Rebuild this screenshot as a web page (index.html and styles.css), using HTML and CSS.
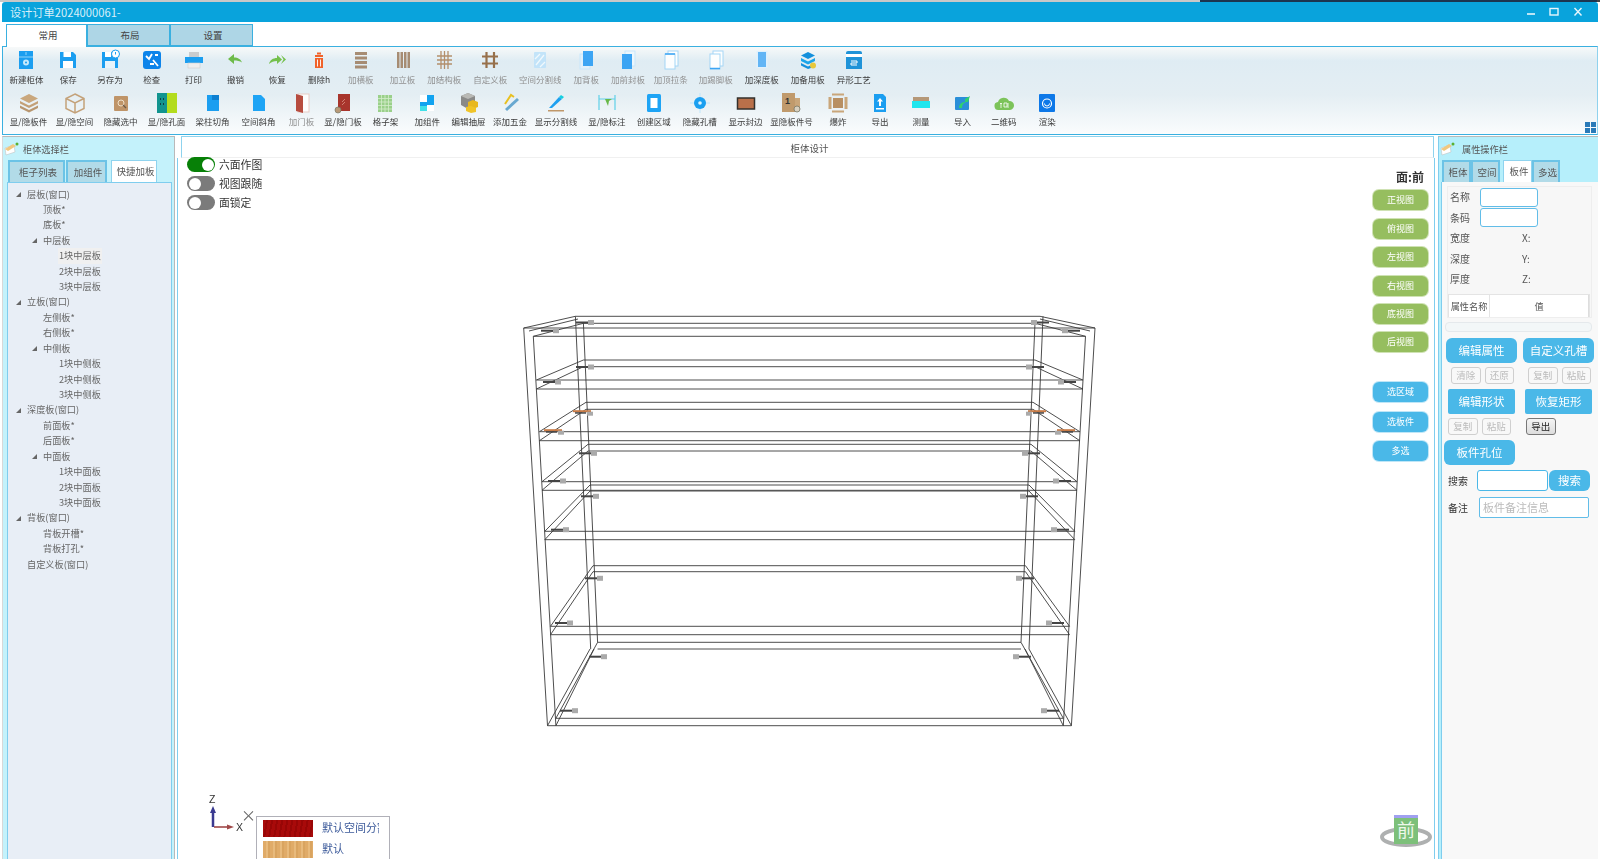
FILE: index.html
```html
<!DOCTYPE html>
<html lang="zh">
<head>
<meta charset="utf-8">
<title>设计订单2024000061-</title>
<link rel="stylesheet" href="styles.css">
</head>
<body>
<div class="topstrip"></div>
<div class="app">
  <header class="titlebar">
    <span class="title">设计订单2024000061-</span>
    <div class="winctl">
      <svg width="12" height="12" viewBox="0 0 12 12"><path d="M2 8h8" stroke="#e8f6fc" stroke-width="1.6"/></svg>
      <svg width="12" height="12" viewBox="0 0 12 12"><rect x="2" y="2.5" width="8" height="6.5" fill="none" stroke="#e8f6fc" stroke-width="1.4"/></svg>
      <svg width="12" height="12" viewBox="0 0 12 12"><path d="M2.5 2l7 7.5M9.500 2l-7 7.500" stroke="#e8f6fc" stroke-width="1.4"/></svg>
    </div>
  </header>
  <nav class="maintabs">
    <div class="mtab on">常用</div>
    <div class="mtab">布局</div>
    <div class="mtab">设置</div>
  </nav>
  <section class="ribbon">
    <div class="rrow">
      <div class="ri w42"><svg viewBox="0 0 22 22"><rect x="4" y="2" width="14" height="18" fill="#1b9ef0"/><path d="M4 8h14M11 3v3" stroke="#c6e9fc" stroke-width=".7"/><circle cx="11" cy="13.500" r="3" fill="#c6e9fc"/><circle cx="11" cy="13.500" r="1" fill="#1b9ef0"/></svg><span>新建柜体</span></div>
      <div class="ri w42"><svg viewBox="0 0 22 22"><path d="M3 3h13l3 3v13H3z" fill="#1b9ef0"/><rect x="6.500" y="3" width="7.500" height="5" fill="#fff"/><rect x="6" y="12" width="10" height="7" fill="#fff"/></svg><span>保存</span></div>
      <div class="ri w42"><svg viewBox="0 0 22 22"><path d="M3 3h13l3 3v13H3z" fill="#1b9ef0"/><rect x="6" y="3" width="6" height="5" fill="#fff"/><rect x="6" y="12" width="10" height="7" fill="#e8f4fb"/><circle cx="16.500" cy="5" r="4" fill="#fff" stroke="#1b9ef0"/><path d="M16.500 3v2.500" stroke="#1b9ef0"/></svg><span>另存为</span></div>
      <div class="ri w42"><svg viewBox="0 0 22 22"><rect x="2" y="2" width="18" height="18" rx="3" fill="#0d84ea"/><path d="M5 7l3 3 3-5M12 11l5 6M9 15h4M14 6h3" stroke="#fff" stroke-width="1.800" fill="none"/></svg><span>检查</span></div>
      <div class="ri w42"><svg viewBox="0 0 22 22"><rect x="6" y="3" width="10" height="5" fill="#c9ccce"/><rect x="2" y="8" width="18" height="6" fill="#1b9ef0"/><rect x="5" y="14" width="12" height="5" fill="#eee" stroke="#ccc" stroke-width=".6"/></svg><span>打印</span></div>
      <div class="ri w42"><svg viewBox="0 0 22 22"><path d="M4 10l6-5v3.500c4 0 7 2 8 5-2-1.500-5-2-8-2V15z" fill="#6dbb4a"/></svg><span>撤销</span></div>
      <div class="ri w42"><svg viewBox="0 0 22 22"><path d="M3 15c1-4 4-6 8-6V6l5 4.500-5 4.500v-3c-3 0-6 1-8 3z" fill="#74c04c"/><path d="M15 6l5 4.500-5 4.500 2.500-4.500z" fill="#74c04c"/></svg><span>恢复</span></div>
      <div class="ri w42"><svg viewBox="0 0 22 22"><rect x="7" y="6" width="8" height="2" fill="#f0622a"/><rect x="9" y="3.500" width="4" height="2" fill="#f0622a"/><rect x="7" y="9" width="8" height="10" fill="#f0622a"/><path d="M9.500 10.500v7M12.500 10.500v7" stroke="#fff" stroke-width=".9"/></svg><span>删除h</span></div>
      <div class="ri w42 off"><svg viewBox="0 0 22 22"><path d="M5 3h12v3H5zM5 7.500h12v3H5zM5 12h12v3H5zM5 16.500h12v3H5z" fill="#a08266"/></svg><span>加横板</span></div>
      <div class="ri w42 off"><svg viewBox="0 0 22 22"><path d="M5 3h2.500v16H5zM8.500 3H11v16H8.500zM12 3h2.500v16H12zM15.500 3H18v16h-2.500z" fill="#a08266"/></svg><span>加立板</span></div>
      <div class="ri w42 off"><svg viewBox="0 0 22 22"><path d="M8 2v18M11.500 2v18M15 2v18M4 7h15M4 11h15M4 15h15" stroke="#ae855e" stroke-width="1.300"/></svg><span>加结构板</span></div>
      <div class="ri w50 off"><svg viewBox="0 0 22 22"><path d="M7.500 3v16M15 3v16M3 7.500h16M3 14.500h16" stroke="#8f6339" stroke-width="2.200"/></svg><span>自定义板</span></div>
      <div class="ri w50 off"><svg viewBox="0 0 22 22"><rect x="5" y="3" width="12" height="16" rx="1" fill="#bfe3fa"/><path d="M7 16L15 6M6 10l5-5M11 18l5-5" stroke="#f2fafe" stroke-width="1.300"/></svg><span>空间分割线</span></div>
      <div class="ri w42 off"><svg viewBox="0 0 22 22"><rect x="5" y="5" width="10" height="15" fill="#dff1fd" stroke="#c5e6fb"/><rect x="8" y="2" width="10" height="15" fill="#2a9df4"/></svg><span>加背板</span></div>
      <div class="ri w42 off"><svg viewBox="0 0 22 22"><rect x="8" y="2" width="10" height="15" fill="#eef8fe" stroke="#c5e6fb"/><rect x="5" y="5" width="10" height="15" fill="#2a9df4"/></svg><span>加前封板</span></div>
      <div class="ri w44 off"><svg viewBox="0 0 22 22"><rect x="8" y="2" width="10" height="15" fill="#fff" stroke="#9ed4f7"/><rect x="5" y="5" width="10" height="15" fill="#fff" stroke="#9ed4f7"/><path d="M5 5h10" stroke="#2a9df4" stroke-width="1.500"/></svg><span>加顶拉条</span></div>
      <div class="ri w46 off"><svg viewBox="0 0 22 22"><rect x="8" y="2" width="10" height="15" fill="#fff" stroke="#9ed4f7"/><rect x="5" y="5" width="10" height="15" fill="#fff" stroke="#9ed4f7"/><path d="M5 19.500h10" stroke="#2a9df4" stroke-width="1.500"/></svg><span>加踢脚板</span></div>
      <div class="ri w46"><svg viewBox="0 0 22 22"><rect x="5.500" y="2" width="11" height="17" fill="#dff1fd"/><rect x="7" y="3" width="8" height="15" fill="#62b5f5"/></svg><span>加深度板</span></div>
      <div class="ri w46"><svg viewBox="0 0 22 22"><path d="M11 3l7 3.500-7 3.500-7-3.500z" fill="#1490dc"/><path d="M4 9l7 3.500L18 9v3l-7 3.500L4 12z" fill="#1ba5ea"/><path d="M4 14l7 3.500 3 -1.500v3l-3 1-7-3.500z" fill="#1490dc"/><circle cx="16" cy="16.500" r="3" fill="#e8c83c"/></svg><span>加备用板</span></div>
      <div class="ri w46"><svg viewBox="0 0 22 22"><path d="M5 2h12a2 2 0 0 1 2 2v16H3V4a2 2 0 0 1 2-2z" fill="#1f93d8"/><path d="M3 8h16V5H3z" fill="#fff"/><path d="M8 12h6v2H8v2h6" stroke="#fff" fill="none"/></svg><span>异形工艺</span></div>
    </div>
    <div class="rrow r2">
      <div class="ri w46"><svg viewBox="0 0 22 22"><path d="M11 2l9 4.500-9 4.500-9-4.500z" fill="#c9a77d"/><path d="M2 9l9 4.500L20 9v2.500L11 16 2 11.500z" fill="#c3a077"/><path d="M2 13.500L11 18l9-4.500V16l-9 4.500L2 16z" fill="#b89670"/></svg><span>显/隐板件</span></div>
      <div class="ri w46"><svg viewBox="0 0 22 22"><path d="M11 2l9 4.500v10L11 21l-9-4.500v-10zM2 6.500L11 11l9-4.500M11 11v10" fill="none" stroke="#c4a27a" stroke-width="1.500"/></svg><span>显/隐空间</span></div>
      <div class="ri w46"><svg viewBox="0 0 22 22"><rect x="4" y="4" width="14" height="15" rx="1" fill="#bf9468"/><circle cx="11" cy="11" r="3" fill="none" stroke="#f0e0c8"/><path d="M13 13l3 3" stroke="#6b5a48" stroke-width="1.300"/></svg><span>隐藏选中</span></div>
      <div class="ri w46"><svg viewBox="0 0 22 22"><rect x="1" y="1" width="10" height="20" fill="#12948f"/><rect x="11" y="1" width="10" height="20" fill="#b3dc1e"/><path d="M4 7h1M7 7h1M4 12h1M7 12h1" stroke="#123" stroke-width="1.500"/></svg><span>显/隐孔面</span></div>
      <div class="ri w46"><svg viewBox="0 0 22 22"><path d="M5 3h12v16H5z" fill="#1b9ef0"/><path d="M10 3h7v5h-7z" fill="#0d7fd0"/></svg><span>梁柱切角</span></div>
      <div class="ri w46"><svg viewBox="0 0 22 22"><path d="M5 3h8l4 4v12H5z" fill="#1ea4f5"/></svg><span>空间斜角</span></div>
      <div class="ri w40 off"><svg viewBox="0 0 22 22"><rect x="7" y="2" width="11" height="18" fill="#fff" stroke="#e8c8c0"/><path d="M5 2l7 2v17l-7-2z" fill="#b23b2c"/></svg><span>加门板</span></div>
      <div class="ri w43"><svg viewBox="0 0 22 22"><rect x="6" y="2" width="12" height="17" fill="#a8352c"/><path d="M10 10l3-3M10 13l3-3" stroke="#e0a090" stroke-width=".7"/><circle cx="6" cy="18" r="3" fill="#b89a78" stroke="#776" stroke-width=".7"/></svg><span>显/隐门板</span></div>
      <div class="ri w42"><svg viewBox="0 0 22 22"><rect x="4" y="3" width="14" height="17" fill="#9ad08a"/><path d="M7.500 3v17M11 3v17M14.500 3v17M4 6.500h14M4 10h14M4 13.500h14M4 17h14" stroke="#d4eccb" stroke-width=".8"/></svg><span>格子架</span></div>
      <div class="ri w42"><svg viewBox="0 0 22 22"><path d="M4 3h14v16H4z" fill="#12a3f0"/><path d="M4 10h7V3H4zM11 19h7v-6h-7z" fill="#fff"/><path d="M4 14h7v5H4z" fill="#3fe0e8"/></svg><span>加组件</span></div>
      <div class="ri w41"><svg viewBox="0 0 22 22"><path d="M10 1l7 3v9l-7 4-7-4V4z" fill="#8a8a88"/><path d="M3 4l7 3 7-3-7-3z" fill="#b9b9b5"/><path d="M10 10l5-2 5 2v5l-5 2-5-2z" fill="#e8b820"/><path d="M8 15l5-1 5 2v4l-5 1-5-2z" fill="#f0c428"/></svg><span>编辑抽屉</span></div>
      <div class="ri w42"><svg viewBox="0 0 22 22"><path d="M6 12L12 3l3 2" fill="none" stroke="#e8c020" stroke-width="2"/><path d="M7 18l12-11" stroke="#68a8d0" stroke-width="3"/></svg><span>添加五金</span></div>
      <div class="ri w50"><svg viewBox="0 0 22 22"><path d="M4 16L14 5l3 2-10 9z" fill="#1ea0f0"/><path d="M14 5l2-2 3 2-2 2z" fill="#14d0e0"/><path d="M3 18h16v1.500H3z" fill="#c0986a"/></svg><span>显示分割线</span></div>
      <div class="ri w52"><svg viewBox="0 0 22 22"><path d="M3 3v15M19 3v15M3 7h16" stroke="#5fd0e8" stroke-width="1.200"/><path d="M9 7l3 7 1-5 3-2z" fill="#68b848"/></svg><span>显/隐标注</span></div>
      <div class="ri w42"><svg viewBox="0 0 22 22"><rect x="4" y="2" width="14" height="18" rx="1.500" fill="#1ea4f5"/><rect x="7.500" y="6" width="7" height="10" fill="#fff"/></svg><span>创建区域</span></div>
      <div class="ri w50"><svg viewBox="0 0 22 22"><path d="M11 1v20M1 11h20" stroke="#bfe6fb"/><circle cx="11" cy="11" r="6" fill="#1a9ff0"/><circle cx="11" cy="11" r="1.800" fill="#dff4ff"/></svg><span>隐藏孔槽</span></div>
      <div class="ri w42"><svg viewBox="0 0 22 22"><rect x="2.500" y="6" width="17" height="11" fill="#b9704a" stroke="#33302c" stroke-width="1.500"/></svg><span>显示封边</span></div>
      <div class="ri w50"><svg viewBox="0 0 22 22"><rect x="2" y="1" width="13" height="19" fill="#c09a6c"/><rect x="15" y="6" width="5" height="12" fill="#c9a67a"/><text x="5" y="12" class="svgnum">1</text><circle cx="17" cy="17" r="3" fill="#d8d0c0" stroke="#776" stroke-width=".8"/></svg><span>显隐板件号</span></div>
      <div class="ri w43"><svg viewBox="0 0 22 22"><rect x="6" y="6" width="10" height="10" fill="#b88f62"/><path d="M3 5v12M19 5v12" stroke="#c9a67a" stroke-width="3"/><path d="M5 2.500h12M5 19.500h12" stroke="#c9a67a" stroke-width="2"/></svg><span>爆炸</span></div>
      <div class="ri w41"><svg viewBox="0 0 22 22"><path d="M5 2h9l3 3v15H5z" fill="#1b9ef0"/><path d="M11 6l3 3.500h-2V14h-2V9.500H8zM7 16h8v1.500H7z" fill="#fff"/></svg><span>导出</span></div>
      <div class="ri w41"><svg viewBox="0 0 22 22"><rect x="3" y="5" width="16" height="4" fill="#b59878"/><rect x="2" y="9" width="18" height="7" fill="#20e6ee"/></svg><span>测量</span></div>
      <div class="ri w42"><svg viewBox="0 0 22 22"><rect x="4" y="5" width="14" height="13" rx="1" fill="#2a8fd8"/><path d="M8 16c0-4 3-6 6-6V7l5-3-2 6-1 0c-2 0-5 2-5 6z" fill="#30d070"/></svg><span>导入</span></div>
      <div class="ri w41"><svg viewBox="0 0 22 22"><path d="M6 18a4 4 0 0 1-1-8 6 6 0 0 1 11-1 4.500 4.500 0 0 1 1 9z" fill="#7cc35a"/><path d="M8 11v5M7 12l1-1 1 1M11 11h3v4h-3zM15 11v5" stroke="#fff" stroke-width=".8" fill="none"/></svg><span>二维码</span></div>
      <div class="ri w46"><svg viewBox="0 0 22 22"><rect x="3" y="2" width="16" height="18" rx="1" fill="#0d78e8"/><circle cx="11" cy="11.500" r="4.500" fill="none" stroke="#fff" stroke-width="1.200"/><path d="M8.500 11.500a2.500 2.500 0 0 0 5 0" fill="none" stroke="#fff"/></svg><span>渲染</span></div>
    </div>
    <svg class="gridbtn" width="11" height="11" viewBox="0 0 11 11"><path d="M0 0h5v5H0zM6 0h5v5H6zM0 6h5v5H0zM6 6h5v5H6z" fill="#2a7ab8"/></svg>
  </section>
  <main class="workspace">
    <aside class="lpanel">
      <div class="phead">
        <svg width="15" height="14" viewBox="0 0 15 14"><path d="M1 6l9-3 1 7-9 3z" fill="#fff" stroke="#bbb" stroke-width=".5"/><path d="M1 7l8-5 3 2-8 5z" fill="#f0c880"/><circle cx="13" cy="2" r="1.500" fill="#58b030"/></svg>
        <span>柜体选择栏</span>
      </div>
      <div class="ptabs lt">
        <div class="ptab t57">柜子列表</div>
        <div class="ptab t41">加组件</div>
        <div class="ptab on t46 sp">快捷加板</div>
      </div>
      <div class="tree">
        <div class="tr l0t"><i class="tri"></i>层板(窗口)</div>
        <div class="tr l1">顶板*</div>
        <div class="tr l1">底板*</div>
        <div class="tr l1t"><i class="tri"></i>中层板</div>
        <div class="tr l2"><span class="sel">1块中层板</span></div>
        <div class="tr l2">2块中层板</div>
        <div class="tr l2">3块中层板</div>
        <div class="tr l0t"><i class="tri"></i>立板(窗口)</div>
        <div class="tr l1">左侧板*</div>
        <div class="tr l1">右侧板*</div>
        <div class="tr l1t"><i class="tri"></i>中侧板</div>
        <div class="tr l2">1块中侧板</div>
        <div class="tr l2">2块中侧板</div>
        <div class="tr l2">3块中侧板</div>
        <div class="tr l0t"><i class="tri"></i>深度板(窗口)</div>
        <div class="tr l1">前面板*</div>
        <div class="tr l1">后面板*</div>
        <div class="tr l1t"><i class="tri"></i>中面板</div>
        <div class="tr l2">1块中面板</div>
        <div class="tr l2">2块中面板</div>
        <div class="tr l2">3块中面板</div>
        <div class="tr l0t"><i class="tri"></i>背板(窗口)</div>
        <div class="tr l1">背板开槽*</div>
        <div class="tr l1">背板打孔*</div>
        <div class="tr l0">自定义板(窗口)</div>
      </div>
    </aside>
    <section class="center">
      <div class="chead">柜体设计</div>
      <div class="canvas">
        <svg class="wire" viewBox="178 159 1257 700" width="1257" height="700">
          <defs>
            <g id="cl"><rect x="0" y="-1" width="13" height="2" fill="#444"/><rect x="12" y="-2.500" width="6" height="5" fill="#aaa"/></g>
            <g id="cr"><rect x="5" y="-1" width="13" height="2" fill="#444"/><rect x="0" y="-2.500" width="6" height="5" fill="#aaa"/></g>
            <g id="ol"><rect x="0" y="-1.500" width="18" height="2" fill="#c87a45"/><rect x="2" y=".5" width="11" height="1.500" fill="#444"/><rect x="14" y="0" width="6" height="4" fill="#aaa"/></g>
            <g id="or"><rect x="2" y="-1.500" width="18" height="2" fill="#c87a45"/><rect x="7" y=".5" width="11" height="1.500" fill="#444"/><rect x="0" y="0" width="6" height="4" fill="#aaa"/></g>
          </defs>
          <g class="wl">
            <path d="M523.700 329L547.500 726.700M533.300 337.300L555.900 726.700M575.400 317.300L590.700 650M583.400 324L597.600 643.300M1095 329L1071.400 726.700M1085.500 337.300L1063.300 726.700M1043 317.300L1029 650M1035 324L1021 643.300"/>
            <path d="M575.400 317.300H1040M583.400 324.300H1035M523.700 329H1095M533.300 337.300H1085.500M523.700 329L575.400 317.300M533.300 337.300L583.400 324.300M529 332L578 320M1095 329L1040 317.300M1085.500 337.300L1035 324.300M1090 332L1040 320"/>
            <path d="M583.400 361H1035M583.400 367.700H1035M536.400 381H1082.900M536.400 390H1082.900M583.400 361L536.400 381M583.400 367.700L536.400 390M1035 361L1082.900 381M1035 367.700L1082.900 390"/>
            <path d="M586 403.300H1033M586 410.300H1033M539.400 432.700H1079.800M539.400 441.700H1079.800M586 403.300L539.400 432.700M586 410.300L539.400 441.700M1033 403.300L1079.800 432.700M1033 410.300L1079.800 441.700"/>
            <path d="M588 445.300H1031M588 452H1031M542 482.700H1077M542 491.300H1077M588 445.300L542 482.700M588 452L542 491.300M1031 445.300L1077 482.700M1031 452L1077 491.300"/>
            <path d="M590 486H1029M590 492H1029M544.800 532.300H1074.800M544.800 540.700H1074.800M590 486L544.800 532.300M590 492L544.800 540.700M1029 486L1074.800 532.300M1029 492L1074.800 540.700"/>
            <path d="M593 566.700H1025.500M593 572.700H1025.500M550.500 627.300H1069.500M550.500 635.700H1069.500M593 566.700L550.500 627.300M593 572.700L550.500 635.700M1025.500 566.700L1069.500 627.300M1025.500 572.700L1069.500 635.700"/>
            <path d="M597.600 643.300H1021M597.600 650H1021M555.900 719.300H1063.300M547.500 726.700H1071.400M597.600 643.300L555.900 719.300M590 650L547.500 726.700M594 650L555.900 726.700M1021 643.300L1063.300 719.300M1029 650L1071.400 726.700M1025 650L1063.300 726.700"/>
          </g>
          <use href="#cl" x="576" y="323.500"/><use href="#cl" x="541" y="331.700"/><use href="#cr" x="1031" y="323.500"/><use href="#cr" x="1062" y="331.700"/>
          <use href="#cl" x="576" y="368"/><use href="#cl" x="543" y="383"/><use href="#cr" x="1026" y="368"/><use href="#cr" x="1058" y="383"/>
          <use href="#ol" x="573" y="412.700"/><use href="#ol" x="544" y="431.700"/><use href="#or" x="1026" y="412.700"/><use href="#or" x="1055" y="431.700"/>
          <use href="#cl" x="579" y="454.300"/><use href="#cl" x="548" y="482"/><use href="#cr" x="1022" y="454.300"/><use href="#cr" x="1053" y="482"/>
          <use href="#cl" x="581" y="497.300"/><use href="#cl" x="551" y="530.700"/><use href="#cr" x="1020" y="497.300"/><use href="#cr" x="1051" y="530.700"/>
          <use href="#cl" x="585" y="579.300"/><use href="#cl" x="555" y="624"/><use href="#cr" x="1016" y="579.300"/><use href="#cr" x="1046" y="624"/>
          <use href="#cl" x="589" y="657.700"/><use href="#cl" x="560" y="711.700"/><use href="#cr" x="1013" y="657.700"/><use href="#cr" x="1041" y="711.700"/>
        </svg>
        <div class="toggles">
          <div class="tg"><i class="sw on"></i>六面作图</div>
          <div class="tg"><i class="sw"></i>视图跟随</div>
          <div class="tg"><i class="sw"></i>面锁定</div>
        </div>
        <div class="views">
          <div class="face">面:前</div>
          <div class="vb g">正视图</div>
          <div class="vb g">俯视图</div>
          <div class="vb g">左视图</div>
          <div class="vb g">右视图</div>
          <div class="vb g">底视图</div>
          <div class="vb g">后视图</div>
          <div class="vb b first">选区域</div>
          <div class="vb b second">选板件</div>
          <div class="vb b">多选</div>
        </div>
        <svg class="axes" width="60" height="50" viewBox="0 0 60 50">
          <path d="M10 21v17" stroke="#3a3a90" stroke-width="2.500"/><path d="M10 17l-3 7h6z" fill="#3a3a90"/>
          <path d="M11 38h16" stroke="#a04848" stroke-width="1.600"/><path d="M31 38l-7-2.500v5z" fill="#a04848"/>
          <text x="6" y="14" class="axt">Z</text><text x="33" y="42" class="axt">X</text>
        </svg>
        <div class="legclose">×</div>
        <div class="legend">
          <div class="lg"><i class="sw1"></i><span>默认空间分割</span></div>
          <div class="lg"><i class="sw2"></i><span>默认</span></div>
        </div>
        <svg class="cube" width="60" height="44" viewBox="0 0 60 44">
          <ellipse cx="30" cy="25" rx="24" ry="8" fill="none" stroke="#aeb0b0" stroke-width="4"/>
          <rect x="18" y="5" width="24" height="27" fill="#7dc07a"/>
          <rect x="18" y="3" width="24" height="3" fill="#a0a0f0"/>
          <text x="30" y="25" class="cubet">前</text>
        </svg>
      </div>
    </section>
    <aside class="rpanel">
      <div class="phead">
        <svg width="15" height="14" viewBox="0 0 15 14"><path d="M1 6l9-3 1 7-9 3z" fill="#fff" stroke="#bbb" stroke-width=".5"/><path d="M1 7l8-5 3 2-8 5z" fill="#f0c880"/><circle cx="13" cy="2" r="1.500" fill="#58b030"/></svg>
        <span>属性操作栏</span>
      </div>
      <div class="ptabs rt">
        <div class="ptab t29">柜体</div>
        <div class="ptab t29">空间</div>
        <div class="ptab on t29 sp2">板件</div>
        <div class="ptab t28">多选</div>
      </div>
      <div class="props">
        <div class="group">
          <div class="fr up"><label>名称</label><div class="inp"></div></div>
          <div class="fr"><label>条码</label><div class="inp"></div></div>
          <div class="fr"><label>宽度</label><b>X:</b></div>
          <div class="fr"><label>深度</label><b>Y:</b></div>
          <div class="fr"><label>厚度</label><b>Z:</b></div>
          <div class="thead"><div class="th1">属性名称</div><div class="th2">值</div></div>
        </div>
        <div class="hscroll"></div>
        <div class="brow r1"><div class="bb w71">编辑属性</div><div class="bb w71 g6">自定义孔槽</div></div>
        <div class="brow r2b"><div class="sb">清除</div><div class="sb">还原</div><div class="sb far">复制</div><div class="sb">粘贴</div></div>
        <div class="brow r3"><div class="bb sq w67">编辑形状</div><div class="bb sq w67 g10">恢复矩形</div></div>
        <div class="brow r4"><div class="sb">复制</div><div class="sb">粘贴</div><div class="sb dark">导出</div></div>
        <div class="brow r5"><div class="bb w71">板件孔位</div></div>
        <div class="brow r6"><label>搜索</label><div class="sinp"></div><div class="bb sbtn">搜索</div></div>
        <div class="brow r7"><label>备注</label><div class="ninp">板件备注信息</div></div>
      </div>
    </aside>
  </main>
</div>
</body>
</html>
```
FILE: styles.css
```css
* { box-sizing: border-box; }
html, body { margin: 0; height: 859px; overflow: hidden; background: #fff; }
body { font-family: "Noto Sans CJK SC", "Noto Sans", sans-serif; color: #444; }
.topstrip { height: 2px; background: linear-gradient(90deg, #c8c8c8 0 1200px, #1c3550 1200px 1597px, #444 1597px); }
.app { margin-left: 2px; width: 1596px; height: 857px; filter: blur(.35px); display: flex; flex-direction: column; }

.titlebar { height: 20px; background: #09a3dc; display: flex; align-items: center; justify-content: space-between; padding: 0 14.500px 0 8px; border-radius: 3px 3px 0 0; }
.title { color: #d8eff9; font-size: 11.200px; line-height: 22px; }
.winctl { display: flex; gap: 11.500px; }
.winctl svg { display: block; }

.maintabs { height: 24px; display: flex; padding: 2px 0 0 4px; background: #fff; position: relative; z-index: 1; }
.mtab { width: 83px; height: 22px; background: #aed6e6; border: 1px solid #3ab0e0; font-size: 9.500px; line-height: 20px; text-align: center; color: #444; padding-left: 3px; }
.mtab.on { width: 81px; height: 23px; background: #fff; border-bottom: 0; }

.ribbon { height: 89px; border: 1px solid #3ab0e0; border-right-color: #8fd2ee; background: linear-gradient(180deg, #f7f9f9 0, #dfecf3 16%, #e4eef3 55%, #fafcfd 100%); padding: 2px 0 0 2.5px; position: relative; }
.rrow { display: flex; height: 37px; }
.rrow.r2 { margin-top: 6px; }
.ri { display: flex; flex-direction: column; align-items: center; flex: none; }
.ri svg { width: 22px; height: 22px; display: block; flex: none; }
.ri span { font-size: 8.500px; line-height: 12px; margin-top: 2px; color: #3a3a3a; white-space: nowrap; }
.rrow.r2 .ri span { margin-top: 1px; }
.ri.off span { color: #909090; }
.ri.off svg { opacity: .9; }
.w40 { width: 40px; } .w41 { width: 41px; } .w42 { width: 41.800px; } .w43 { width: 43px; } .w44 { width: 44px; }
.w46 { width: 46px; } .w50 { width: 50px; } .w52 { width: 52px; }
.svgnum { font: 700 9px "Liberation Sans", sans-serif; fill: #333; }
.gridbtn { position: absolute; right: 1px; bottom: 1px; }

.workspace { flex: 1; display: flex; min-height: 0; padding-top: 1px; }
.lpanel { width: 173px; border: 1px solid #b9b9b9; border-bottom: 0; border-left-color: #d8d8d8; display: flex; flex-direction: column; background: #c4f2fb; }
.phead { height: 23px; display: flex; align-items: center; gap: 4px; padding-left: 1px; font-size: 9.200px; color: #555; flex: none; }
.rpanel .phead { gap: 7px; }
.phead svg { flex: none; }
.ptabs { height: 22px; display: flex; flex: none; }
.lt { padding-left: 5px; }
.rt { padding-left: 3px; }
.ptab { height: 22px; background: #b2dbe8; border: 2px solid #6cc3e6; border-bottom: 0; font-size: 9.500px; line-height: 20px; text-align: center; color: #555; white-space: nowrap; margin-right: 1px; padding-left: 3px; }
.ptab.on { background: #fff; border-width: 1px 1px 0; border-color: #8fd3ee; }
.t57 { width: 57px; } .t41 { width: 41px; } .t46 { width: 46px; } .t29 { width: 29px; margin-right: 0; } .t28 { width: 28px; }
.sp { margin-left: 3px; } .sp2 { margin-left: 3px; }

.tree { flex: 1; margin: 0 2px 0 4px; background: #e8eef6; border: 1px solid #7fcdee; border-bottom: 0; padding-top: 3.500px; font-size: 9.200px; color: #666; }
.tr { height: 15.430px; line-height: 15.430px; display: flex; align-items: center; white-space: nowrap; }
.tri { width: 0; height: 0; border-left: 5px solid transparent; border-bottom: 5px solid #666; margin-right: 6px; flex: none; }
.l0 { padding-left: 19px; } .l0t { padding-left: 8px; }
.l1 { padding-left: 35px; } .l1t { padding-left: 24px; }
.l2 { padding-left: 51px; }
.sel { background: #f0f0f0; padding: 0 1px; margin-left: -1px; }

.center { width: 1258px; margin-left: 2px; margin-right: 3px; display: flex; flex-direction: column; flex: none; }
.chead { height: 22px; flex: none; margin: 0 1px 0 4px; border: 1px solid #8fd3ee; border-bottom: 1px solid #f0f0f0; font-size: 9.500px; line-height: 22px; text-align: center; color: #555; background: #fff; padding-left: 4px; }
.canvas { flex: 1; position: relative; border-left: 1px solid #7fcdee; border-right: 1px solid #7fcdee; background: #fff; }
.wire { position: absolute; left: 0; top: 0; display: block; }
.wl path { fill: none; stroke: #3a3a3a; stroke-width: .9; }

.toggles { position: absolute; left: 9px; top: -3px; font-size: 10.800px; color: #333; }
.tg { height: 19px; display: flex; align-items: center; gap: 4px; line-height: 19px; }
.sw { width: 28px; height: 15px; border-radius: 8px; background: #7b7b7b; position: relative; display: block; }
.sw::after { content: ""; position: absolute; left: 1.500px; top: 1.500px; width: 12px; height: 12px; border-radius: 50%; background: #fff; }
.sw.on { background: #078007; }
.sw.on::after { left: 14.500px; }

.views { position: absolute; left: 1195px; top: 10px; width: 55px; display: flex; flex-direction: column; gap: 8.400px; }
.face { height: 18px; margin-bottom: -4px; font-size: 12px; font-weight: 700; line-height: 18px; text-align: right; padding-right: 4px; color: #333; }
.vb { height: 20px; border-radius: 6px; color: #fff; font-size: 9px; line-height: 20px; text-align: center; }
.vb.g { background: #96be5f; box-shadow: 0 0 0 1px #cfe2b4; }
.vb.b { background: #4ab8e8; box-shadow: 0 0 0 1px #bfe6f7; }
.vb.first { margin-top: 21.600px; }
.vb.second { margin-top: 1.600px; }

.axes { position: absolute; left: 25px; top: 631px; }
.axt { font: 10.500px "Liberation Sans", sans-serif; fill: #333; }
.legclose { position: absolute; left: 63px; top: 649px; font-size: 15px; line-height: 15px; color: #666; }
.legend { position: absolute; left: 78px; bottom: 0; width: 134px; height: 43px; border: 1px solid #b0b0b8; border-bottom: 0; background: #fff; padding: 3px 0 0 6px; overflow: hidden; }
.lg { display: flex; gap: 9px; height: 17px; margin-bottom: 4px; font-size: 11px; line-height: 15px; color: #3c5a9a; white-space: nowrap; }
.lg span { width: 57px; overflow: hidden; }
.lg i { width: 50px; height: 17px; display: block; flex: none; }
.sw1 { background: repeating-linear-gradient(100deg, #a80a0a 0 3px, #980606 3px 5px); }
.sw2 { background: repeating-linear-gradient(90deg, #e0ab68 0 3px, #e8ba7c 3px 5px, #d9a460 5px 7px); }
.cube { position: absolute; left: 1198px; top: 654px; }
.cubet { font-size: 18px; fill: #eef8ea; text-anchor: middle; }

.rpanel { flex: 1; min-width: 0; border-left: 1px solid #7fcdee; display: flex; flex-direction: column; background: #b6effb; border-top: 1px solid #b9b9b9; }
.props { flex: 1; margin-left: 2px; border-left: 1px solid #7fcdee; background: #f8f8f8; padding: 4px 0 0 5px; font-size: 10px; color: #555; }
.group { width: 145px; height: 132px; background: #f7f7f7; border: 1px solid #eee; padding-left: 2px; }
.fr { height: 20.300px; display: flex; align-items: center; }
.fr.up label { margin-top: -2px; }
.fr label { width: 30px; flex: none; }
.fr b { font-weight: 400; margin-left: 42px; }
.inp { width: 58px; height: 19px; background: #fff; border: 1px solid #62bde8; border-radius: 3px; }
.thead { margin: 5.500px 0 0 -2px; height: 23px; display: flex; background: #fff; border: 1px solid #e4e4e4; border-bottom: 0; font-size: 9.200px; line-height: 23px; text-align: center; width: 142px; }
.th1 { width: 41px; border-right: 1px solid #e4e4e4; white-space: nowrap; }
.th2 { flex: 1; border-right: 1px solid #ddd; }
.hscroll { width: 147px; height: 10px; margin: 4px 0 0 -2px; background: #f3f7f8; border: 1px solid #e5e9ec; border-radius: 4px; }
.brow { display: flex; align-items: flex-start; }
.bb { height: 25px; background: #4ab8e8; border-radius: 6px; color: #fff; font-size: 11.500px; line-height: 25px; text-align: center; white-space: nowrap; flex: none; }
.bb.sq { border-radius: 2px; }
.w71 { width: 71px; } .w67 { width: 67px; }
.g6 { margin-left: 6px; } .g10 { margin-left: 10px; }
.sb { width: 29.500px; height: 17px; border: 1px solid #cfcfcf; border-radius: 3px; margin-right: 4px; font-size: 9.500px; line-height: 15px; text-align: center; color: #bbb; flex: none; }
.sb.far { margin-left: 10px; }
.sb.dark { margin-left: 11px; color: #222; border-color: #777; background: linear-gradient(#f4f4f4, #ddd); }
.r1 { margin: 6px 0 0 -1px; }
.r2b { margin: 4px 0 0 4px; }
.r3 { margin: 5px 0 0 1px; }
.r4 { margin: 4px 0 0 1px; }
.r5 { margin: 5px 0 0 -3px; }
.r6 { margin: 5px 0 0 1px; height: 21px; align-items: center; color: #333; }
.r6 label, .r7 label { width: 29px; flex: none; }
.sinp { width: 71px; height: 21px; background: #fff; border: 1px solid #4ab8e8; border-radius: 3px; flex: none; }
.sbtn { width: 41px; height: 21px; line-height: 21px; margin-left: 1px; }
.r7 { margin: 6px 0 0 1px; height: 21px; align-items: center; color: #333; }
.r7 label { width: 31px; }
.ninp { width: 110px; height: 21px; background: #fff; border: 1px solid #62bde8; border-radius: 2px; color: #bbb; font-size: 11px; line-height: 19px; padding-left: 3px; }
```
